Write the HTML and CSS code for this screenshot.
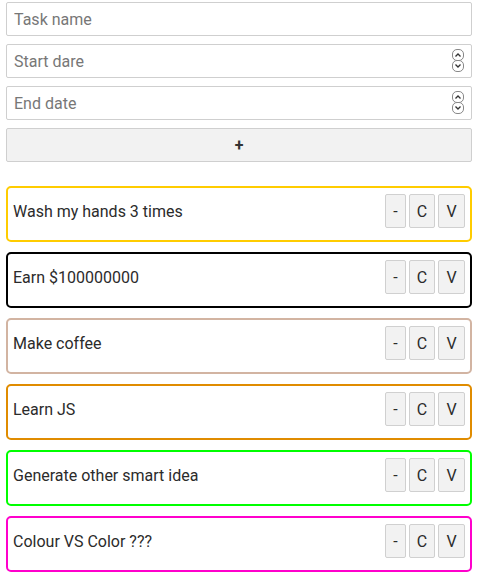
FILE: index.html
```html
<!DOCTYPE html>
<html>
<head>
<meta charset="utf-8">
<link rel="stylesheet" href="styles.css">
</head>
<body>
<div class="app">
  <form class="form">
    <div class="field"><input class="input" type="text" placeholder="Task name"></div>
    <div class="field">
      <input class="input" type="text" placeholder="Start dare">
      <span class="spin"><span class="spin-btn"><svg width="10" height="8" viewBox="0 0 10 8"><path d="M2.5 5.5 L5 3 L7.5 5.5" fill="none" stroke="#333" stroke-width="1.3"/></svg></span><span class="spin-btn"><svg width="10" height="8" viewBox="0 0 10 8"><path d="M2.5 2.5 L5 5 L7.5 2.5" fill="none" stroke="#333" stroke-width="1.3"/></svg></span></span>
    </div>
    <div class="field">
      <input class="input" type="text" placeholder="End date">
      <span class="spin"><span class="spin-btn"><svg width="10" height="8" viewBox="0 0 10 8"><path d="M2.5 5.5 L5 3 L7.5 5.5" fill="none" stroke="#333" stroke-width="1.3"/></svg></span><span class="spin-btn"><svg width="10" height="8" viewBox="0 0 10 8"><path d="M2.5 2.5 L5 5 L7.5 2.5" fill="none" stroke="#333" stroke-width="1.3"/></svg></span></span>
    </div>
    <button class="add" type="button">+</button>
  </form>
  <ul class="list">
    <li class="card c-gold"><span class="title">Wash my hands 3 times</span><span class="actions"><button class="btn b-del">-</button><button class="btn b-c">C</button><button class="btn b-v">V</button></span></li>
    <li class="card c-black"><span class="title">Earn $100000000</span><span class="actions"><button class="btn b-del">-</button><button class="btn b-c">C</button><button class="btn b-v">V</button></span></li>
    <li class="card c-tan"><span class="title">Make coffee</span><span class="actions"><button class="btn b-del">-</button><button class="btn b-c">C</button><button class="btn b-v">V</button></span></li>
    <li class="card c-orange"><span class="title">Learn JS</span><span class="actions"><button class="btn b-del">-</button><button class="btn b-c">C</button><button class="btn b-v">V</button></span></li>
    <li class="card c-lime"><span class="title">Generate other smart idea</span><span class="actions"><button class="btn b-del">-</button><button class="btn b-c">C</button><button class="btn b-v">V</button></span></li>
    <li class="card c-magenta"><span class="title">Colour VS Color ???</span><span class="actions"><button class="btn b-del">-</button><button class="btn b-c">C</button><button class="btn b-v">V</button></span></li>
  </ul>
</div>
</body>
</html>
```
FILE: styles.css
```css
* { box-sizing: border-box; }
html, body { margin: 0; padding: 0; background: #fff; }
body { font-family: Roboto, "Liberation Sans", sans-serif; color: #333; }
.app { width: 466px; margin: 2px 0 0 6px; }
.form { display: flex; flex-direction: column; gap: 8px; margin: 0; }
.field { position: relative; height: 34px; }
.input {
  width: 100%; height: 34px; border: 1px solid #cfcfcf; border-radius: 2px;
  padding: 0 7px; font-family: Roboto, "Liberation Sans", sans-serif; font-size: 16px; color: #333;
  outline: none; background: #fff;
}
.input::placeholder { color: #777; }
.spin {
  position: absolute; right: 8px; top: 5px; display: flex; flex-direction: column;
}
.spin-btn {
  width: 12px; height: 12px; border: 1px solid #888; border-radius: 5px;
  display: flex; align-items: center; justify-content: center; background: #fff; margin-top: -1px;
}
.spin-btn:first-child { margin-top: 0; }
.add {
  height: 34px; border: 1px solid #cfcfcf; border-radius: 2px; background: #f2f2f2;
  font-family: Roboto, "Liberation Sans", sans-serif; font-size: 16px; font-weight: 700; color: #333; padding: 0;
}
.list { list-style: none; margin: 24px 0 0; padding: 0; display: flex; flex-direction: column; gap: 10px; }
.card {
  height: 56px; border: 2px solid #000; border-radius: 5px;
  padding: 6px 5px 12px 5px; display: flex; align-items: center; justify-content: space-between;
}
.title { font-size: 16px; color: #2b2b2b; }
.actions { display: flex; gap: 3px; }
.btn {
  height: 34px; padding: 0; border: 1px solid #d0d0d0; border-radius: 2px;
  background: #f2f2f2; font-family: Roboto, "Liberation Sans", sans-serif; font-size: 16px; color: #2b2b2b;
}
.b-del { width: 21px; }
.b-c { width: 26px; }
.b-v { width: 27px; }
.c-gold { border-color: #ffcc00; }
.c-black { border-color: #000; }
.c-tan { border-color: #d2b4a2; }
.c-orange { border-color: #e08c00; }
.c-lime { border-color: #00ff00; }
.c-magenta { border-color: #ff00cc; }
```
